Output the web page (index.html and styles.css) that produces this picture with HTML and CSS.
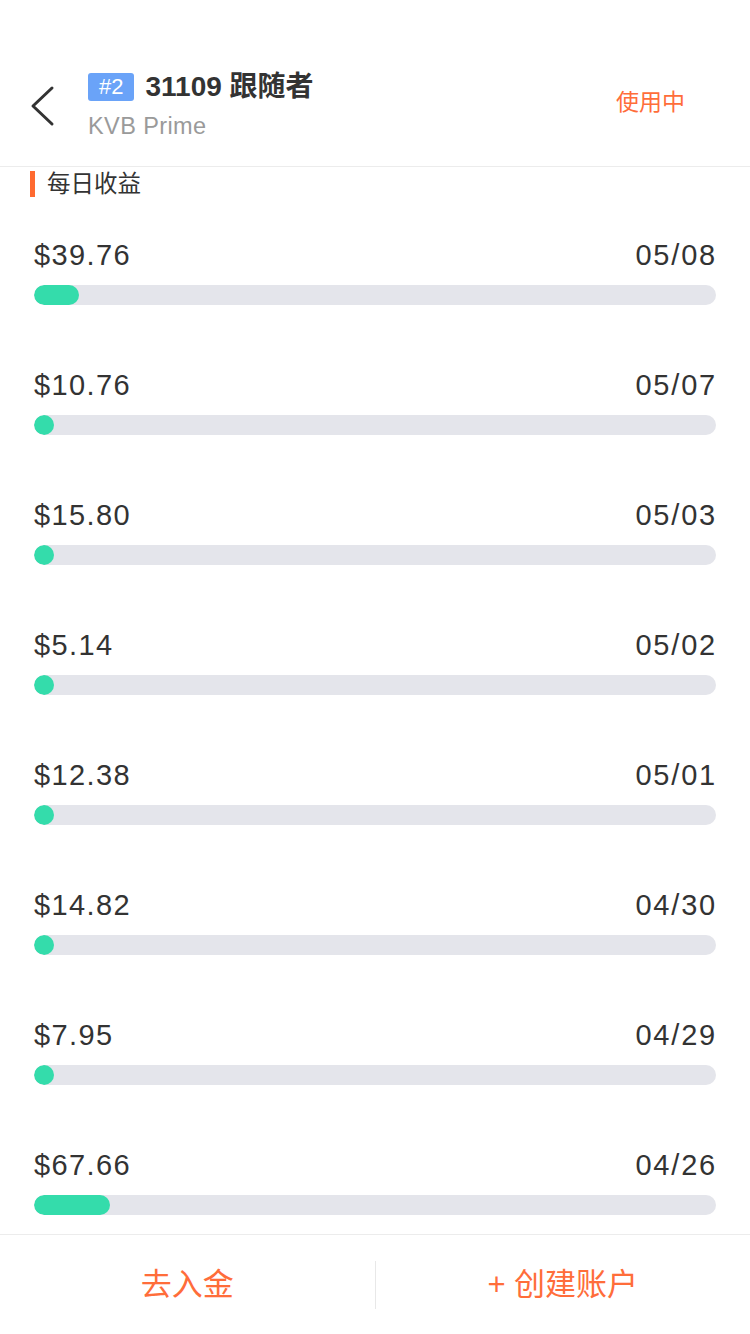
FILE: index.html
```html
<!DOCTYPE html>
<html lang="zh-CN">
<head>
<meta charset="utf-8">
<title>每日收益</title>
<link rel="stylesheet" href="styles.css">
</head>
<body>
<div class="page">
  <header class="header">
    <div class="back">
      <svg width="26" height="42" viewBox="0 0 26 42"><polyline points="23,3 4,21 23,39" fill="none" stroke="#333" stroke-width="3" stroke-linecap="round" stroke-linejoin="round"/></svg>
    </div>
    <div class="info">
      <div class="title-row"><span class="badge">#2</span><span class="title">31109 跟随者</span></div>
      <div class="subtitle">KVB Prime</div>
    </div>
    <div class="status">使用中</div>
  </header>
  <div class="section-title">每日收益</div>
  <div class="list">
    <div class="row"><div class="row-top"><span class="amt">$39.76</span><span class="date">05/08</span></div><div class="track"><div class="fill" style="width:45px"></div></div></div>
    <div class="row"><div class="row-top"><span class="amt">$10.76</span><span class="date">05/07</span></div><div class="track"><div class="fill" style="width:20px"></div></div></div>
    <div class="row"><div class="row-top"><span class="amt">$15.80</span><span class="date">05/03</span></div><div class="track"><div class="fill" style="width:20px"></div></div></div>
    <div class="row"><div class="row-top"><span class="amt">$5.14</span><span class="date">05/02</span></div><div class="track"><div class="fill" style="width:20px"></div></div></div>
    <div class="row"><div class="row-top"><span class="amt">$12.38</span><span class="date">05/01</span></div><div class="track"><div class="fill" style="width:20px"></div></div></div>
    <div class="row"><div class="row-top"><span class="amt">$14.82</span><span class="date">04/30</span></div><div class="track"><div class="fill" style="width:20px"></div></div></div>
    <div class="row"><div class="row-top"><span class="amt">$7.95</span><span class="date">04/29</span></div><div class="track"><div class="fill" style="width:20px"></div></div></div>
    <div class="row"><div class="row-top"><span class="amt">$67.66</span><span class="date">04/26</span></div><div class="track"><div class="fill" style="width:76px"></div></div></div>
  </div>
  <footer class="footer">
    <div class="btn">去入金</div>
    <div class="divider"></div>
    <div class="btn">+ 创建账户</div>
  </footer>
</div>
</body>
</html>
```

FILE: styles.css
```css
* { box-sizing: border-box; }
html, body { margin: 0; padding: 0; background: #fff; }
body {
  font-family: "Liberation Sans", "Noto Sans CJK SC", sans-serif;
  color: #333;
}
.page {
  width: 750px;
  height: 1334px;
  display: flex;
  flex-direction: column;
  overflow: hidden;
}
.header {
  display: flex;
  align-items: center;
  padding: 66px 65px 22px 29px;
  border-bottom: 1px solid #ececec;
  height: 167px;
}
.back {
  width: 59px;
  display: flex;
  align-items: center;
  padding-top: 2px;
}
.back svg { display: block; }
.info { flex: 1; }
.title-row {
  display: flex;
  align-items: center;
  height: 42px;
}
.badge {
  background: #6aa3f8;
  color: #fff;
  font-size: 22px;
  line-height: 28px;
  height: 28px;
  padding: 0 11px;
  border-radius: 3px;
  margin-right: 11px;
}
.title {
  font-size: 28px;
  font-weight: bold;
  color: #333;
  line-height: 42px;
}
.subtitle {
  font-size: 23.5px;
  color: #9a9a9a;
  line-height: 36px;
  letter-spacing: 0.4px;
}
.status {
  color: #ff6d3a;
  font-size: 23px;
  line-height: 30px;
  margin-top: -6px;
}
.section-title {
  margin: 4px 0 0 30px;
  border-left: 5px solid #ff6a30;
  padding-left: 12px;
  font-size: 23.5px;
  line-height: 26px;
  height: 26px;
  color: #333;
}
.list {
  flex: 1;
  overflow: hidden;
  padding: 38px 34px 0 34px;
}
.row {
  height: 130px;
}
.row-top {
  display: flex;
  justify-content: space-between;
  align-items: center;
  height: 40px;
  font-size: 29px;
  color: #333;
}
.amt { letter-spacing: 1.4px; }
.date { letter-spacing: 1.8px; margin-right: -1px; }
.track {
  margin-top: 10px;
  height: 20px;
  border-radius: 10px;
  background: #e4e5eb;
  overflow: hidden;
}
.fill {
  height: 20px;
  border-radius: 10px;
  background: #34dcab;
}
.footer {
  height: 100px;
  border-top: 1px solid #ececec;
  display: flex;
  align-items: center;
  flex-shrink: 0;
}
.btn {
  flex: 1;
  text-align: center;
  color: #ff6d3a;
  font-size: 31px;
  line-height: 40px;
}
.divider {
  width: 1px;
  height: 48px;
  background: #e8e8e8;
}
```
